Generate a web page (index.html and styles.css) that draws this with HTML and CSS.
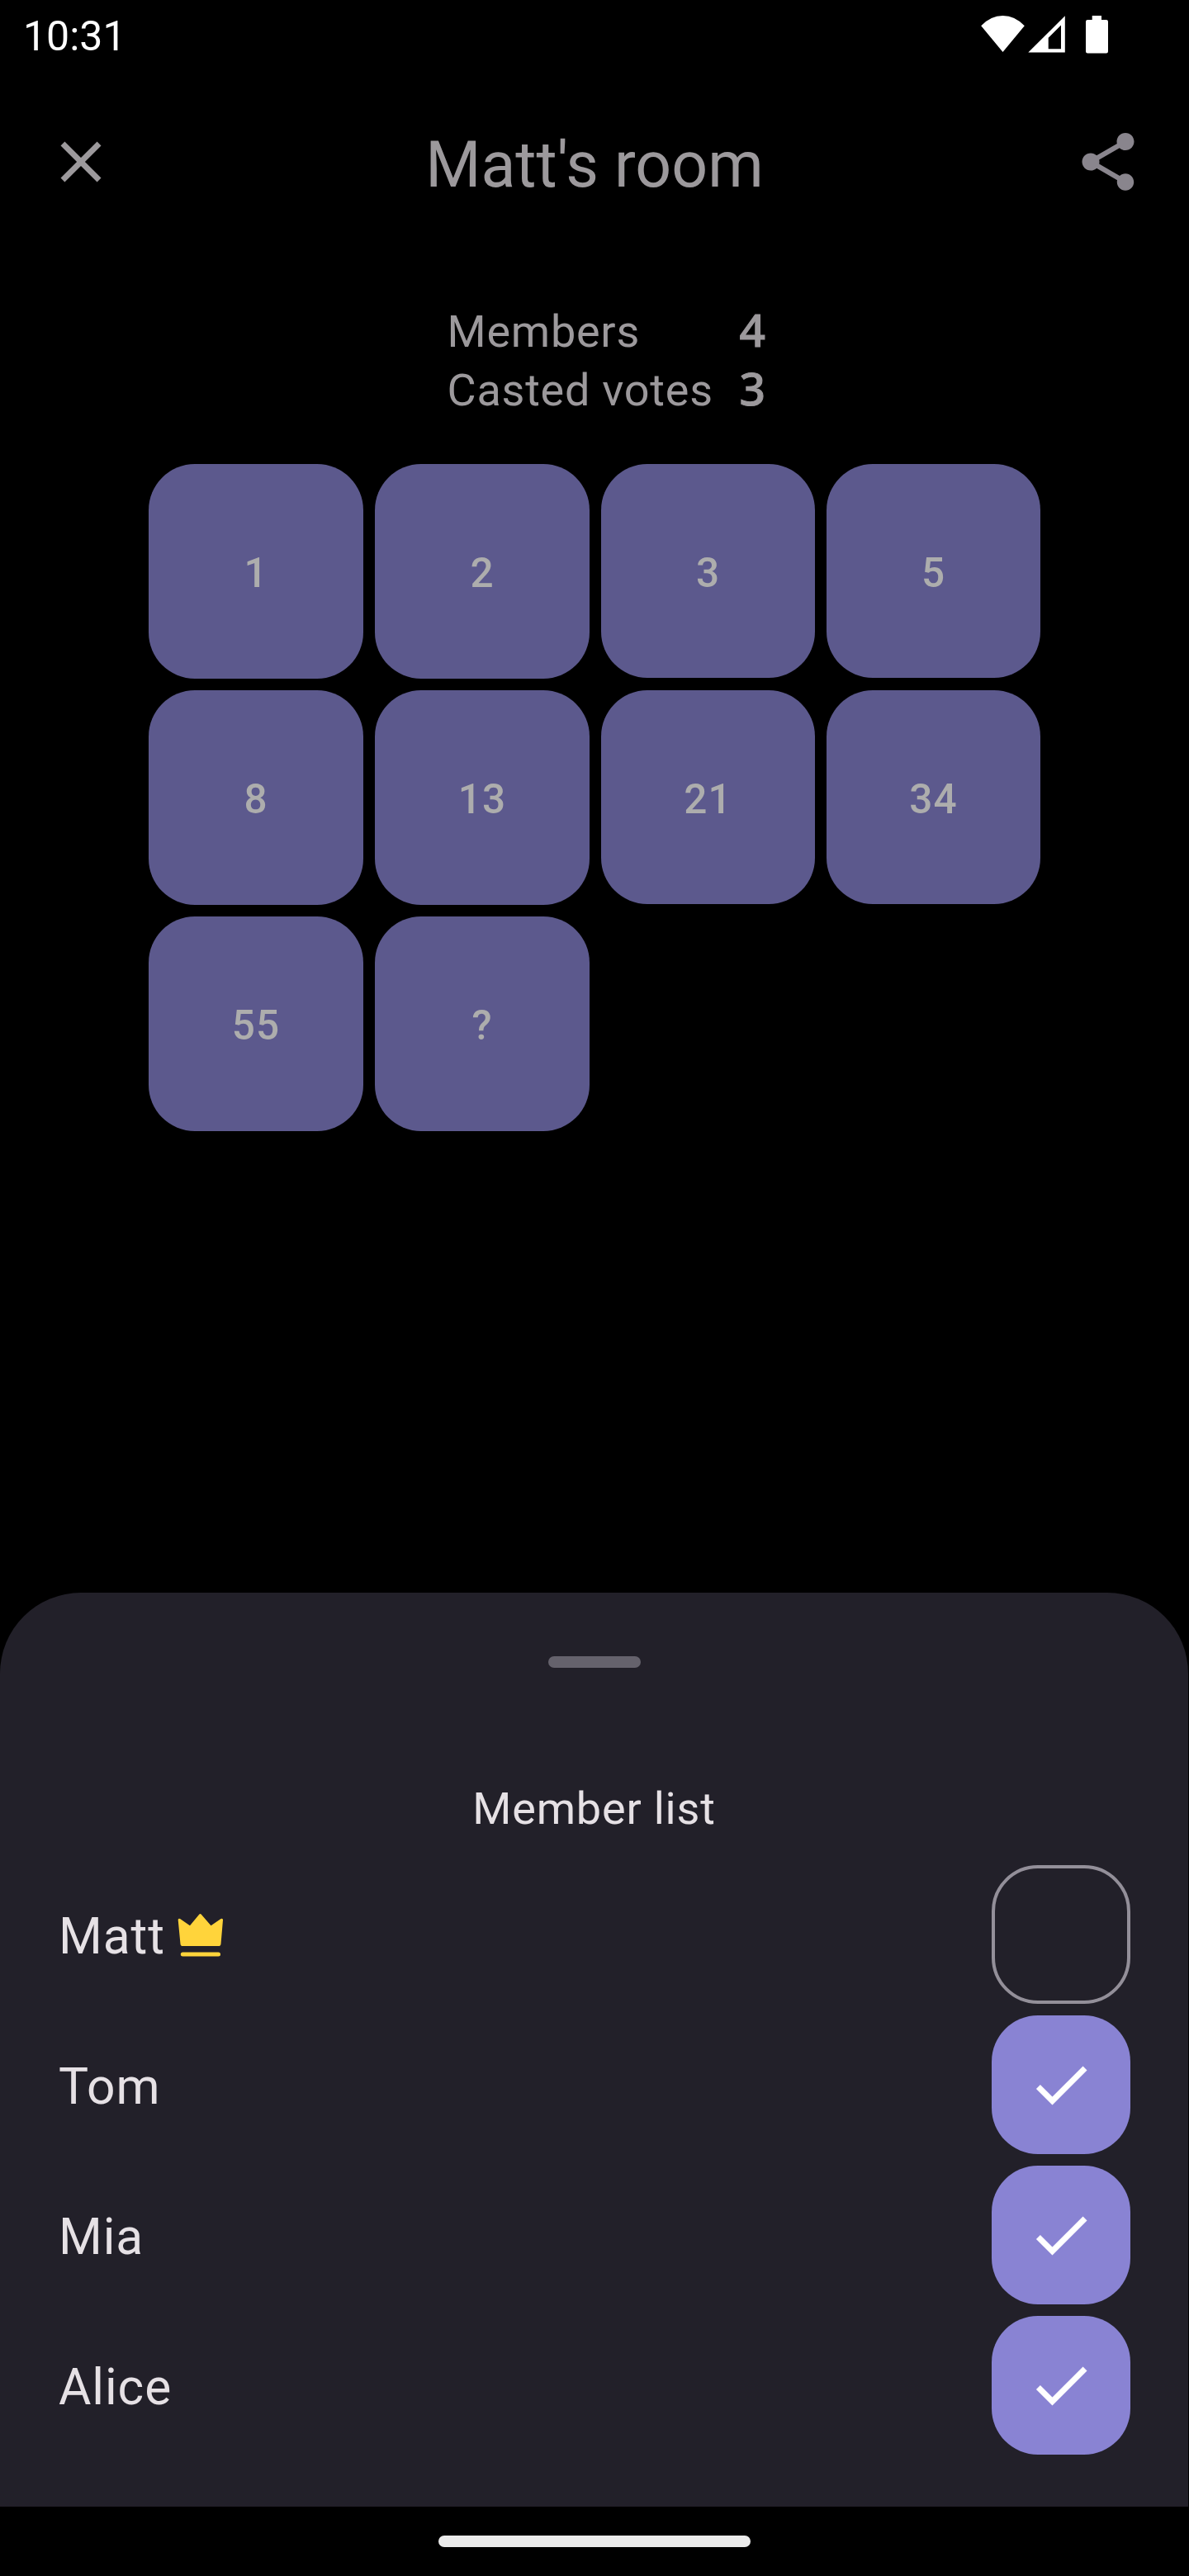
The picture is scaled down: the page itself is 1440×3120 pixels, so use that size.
FILE: index.html
```html
<!DOCTYPE html>
<html lang="en">
<head>
<meta charset="utf-8">
<title>Matt's room</title>
<link rel="stylesheet" href="styles.css">
</head>
<body>
<div class="screen">
  <div class="room">
    <div class="status-bar">
      <span class="clock">10:31</span>
      <svg class="status-icons" viewBox="0 0 160 50" fill="#fff">
        <path d="M0.2 13.3Q11.8 1 26.5 1T52.8 13.3L26.5 45z"/>
        <path fill-rule="evenodd" d="M57.3 45.6 101.8 1.3V45.6zM81.7 27.8V41.2H97V12.6z"/>
        <path d="M134.7 1h11.3v5h5.800q2.200 0 2.200 2.200v36q0 2.200-2.200 2.200h-22.600q-2.200 0-2.200-2.200v-36q0-2.200 2.200-2.200h5.500z"/>
      </svg>
    </div>
    <header class="app-bar">
      <svg class="icon" viewBox="0 0 24 24" fill="#9c999c"><path d="M19 6.410 17.590 5 12 10.590 6.410 5 5 6.410 10.590 12 5 17.590 6.410 19 12 13.410 17.590 19 19 17.590 13.410 12z"/></svg>
      <h1 class="title">Matt's room</h1>
      <svg class="icon" viewBox="0 0 24 24" fill="#89858d"><path d="M18 16.080c-.76 0-1.440.3-1.960.77L8.910 12.700c.05-.23.09-.46.09-.7s-.04-.47-.09-.7l7.050-4.110c.54.5 1.250.81 2.040.81 1.660 0 3-1.340 3-3s-1.340-3-3-3-3 1.340-3 3c0 .24.04.47.09.7L8.040 9.810C7.500 9.310 6.790 9 6 9c-1.660 0-3 1.340-3 3s1.340 3 3 3c.79 0 1.500-.31 2.040-.81l7.120 4.160c-.05.21-.08.43-.08.65 0 1.610 1.310 2.920 2.920 2.920s2.920-1.310 2.920-2.920-1.310-2.920-2.920-2.920z"/></svg>
    </header>
    <div class="stats">
      <span>Members</span><span class="count">4</span>
      <span>Casted votes</span><span class="count">3</span>
    </div>
    <div class="cards">
      <div class="card">1</div><div class="card">2</div><div class="card narrow">3</div><div class="card narrow">5</div>
      <div class="card">8</div><div class="card">13</div><div class="card narrow">21</div><div class="card narrow">34</div>
      <div class="card">55</div><div class="card">?</div>
    </div>
  </div>
  <section class="sheet">
    <div class="handle"></div>
    <h2 class="sheet-title">Member list</h2>
    <div class="members">
      <div class="member">
        <span class="name">Matt</span>
        <svg class="crown" viewBox="0 0 56 54" fill="#ffd43b"><path d="M.7 8.600Q.5 6 3.100 6.900L15 15.300 26.200 1.800Q27.500.2 28.800 1.800L40.500 15.300 52.500 6.900Q55.200 6 55 8.600L52.500 37.400Q52.200 40 49.500 40H6.500Q3.800 40 3.500 37.400z"/><rect x="3.800" y="47.600" width="48.200" height="5" rx="2.500"/></svg>
        <span class="vote empty"></span>
      </div>
      <div class="member">
        <span class="name">Tom</span>
        <span class="vote"><svg class="icon" viewBox="0 0 24 24" fill="#fff"><path d="M9 16.170 4.830 12l-1.420 1.410L9 19 21 7l-1.410-1.410z"/></svg></span>
      </div>
      <div class="member">
        <span class="name">Mia</span>
        <span class="vote"><svg class="icon" viewBox="0 0 24 24" fill="#fff"><path d="M9 16.170 4.830 12l-1.420 1.410L9 19 21 7l-1.410-1.410z"/></svg></span>
      </div>
      <div class="member">
        <span class="name">Alice</span>
        <span class="vote"><svg class="icon" viewBox="0 0 24 24" fill="#fff"><path d="M9 16.170 4.830 12l-1.420 1.410L9 19 21 7l-1.410-1.410z"/></svg></span>
      </div>
    </div>
  </section>
  <div class="nav-bar"><div class="nav-pill"></div></div>
</div>
</body>
</html>
```
FILE: styles.css
```css
* { box-sizing: border-box; }
body { margin: 0; background: #000; }
.screen {
  width: 1440px;
  height: 3120px;
  display: flex;
  flex-direction: column;
  background: #000;
  font-family: Roboto, sans-serif;
  overflow: hidden;
}
.icon { display: block; width: 84px; height: 84px; flex: none; }

.room { height: 1929px; flex: none; }
.status-bar {
  display: flex;
  justify-content: space-between;
  align-items: flex-start;
  height: 105px;
  padding: 15px 92px 0 28px;
  color: #fff;
}
.clock { font-size: 50px; line-height: 58px; }
.status-icons { display: block; width: 160px; height: 50px; margin-top: 3px; }

.app-bar {
  display: flex;
  align-items: center;
  justify-content: space-between;
  height: 182px;
  padding: 0 56px;
}
.title {
  margin: 0;
  padding-top: 7px;
  font-size: 77px;
  line-height: 98px;
  font-weight: 400;
  color: #9c999c;
}

.stats {
  display: grid;
  grid-template-columns: 354px 40px;
  grid-auto-rows: 71px;
  margin: 79px 0 54px 541.5px;
  font-size: 54px;
  letter-spacing: 0.75px;
  line-height: 71px;
  color: #9c999c;
  white-space: nowrap;
}
.count {
  font-family: "Noto Sans", sans-serif;
  font-size: 55px;
  font-weight: 500;
  line-height: 65px;
  -webkit-text-stroke: 1px #9c999c;
}

.cards {
  display: grid;
  grid-template-columns: 260px 260px 259px 259px;
  gap: 14px;
  margin-left: 180px;
}
.card {
  display: flex;
  align-items: center;
  justify-content: center;
  height: 260px;
  padding-top: 4px;
  border-radius: 56px;
  background: #5c598d;
  color: #adadad;
  font-size: 49.5px;
  font-weight: 500;
  letter-spacing: 1.1px;
}
.narrow { height: 259px; }

.sheet {
  display: flex;
  flex-direction: column;
  align-items: center;
  width: 1439px;
  height: 1107px;
  flex: none;
  padding-top: 77px;
  border-radius: 98px 98px 0 0;
  background: #222029;
  color: #e6e1e5;
}
.handle { width: 112px; height: 14px; border-radius: 7px; background: #65626c; }
.sheet-title {
  margin: 129px 0 26px;
  font-size: 54px;
  font-weight: 400;
  letter-spacing: 0.8px;
  line-height: 84px;
}
.members {
  display: flex;
  flex-direction: column;
  gap: 14px;
  width: 100%;
  padding: 0 70px 0 71px;
}
.member { display: flex; align-items: center; height: 168px; }
.name { padding-top: 5px; font-size: 60.5px; letter-spacing: 0.9px; line-height: 84px; }
.crown { display: block; width: 56px; height: 54px; margin: 2px 0 0 15px; }
.vote {
  display: flex;
  align-items: center;
  justify-content: center;
  width: 168px;
  height: 168px;
  margin-left: auto;
  border-radius: 56px;
  background: #8983d3;
}
.empty { border: 4px solid #938f99; background: none; }

.nav-bar { display: flex; justify-content: center; padding-top: 35px; }
.nav-pill { width: 378px; height: 14px; border-radius: 7px; background: #ebebeb; }
```
